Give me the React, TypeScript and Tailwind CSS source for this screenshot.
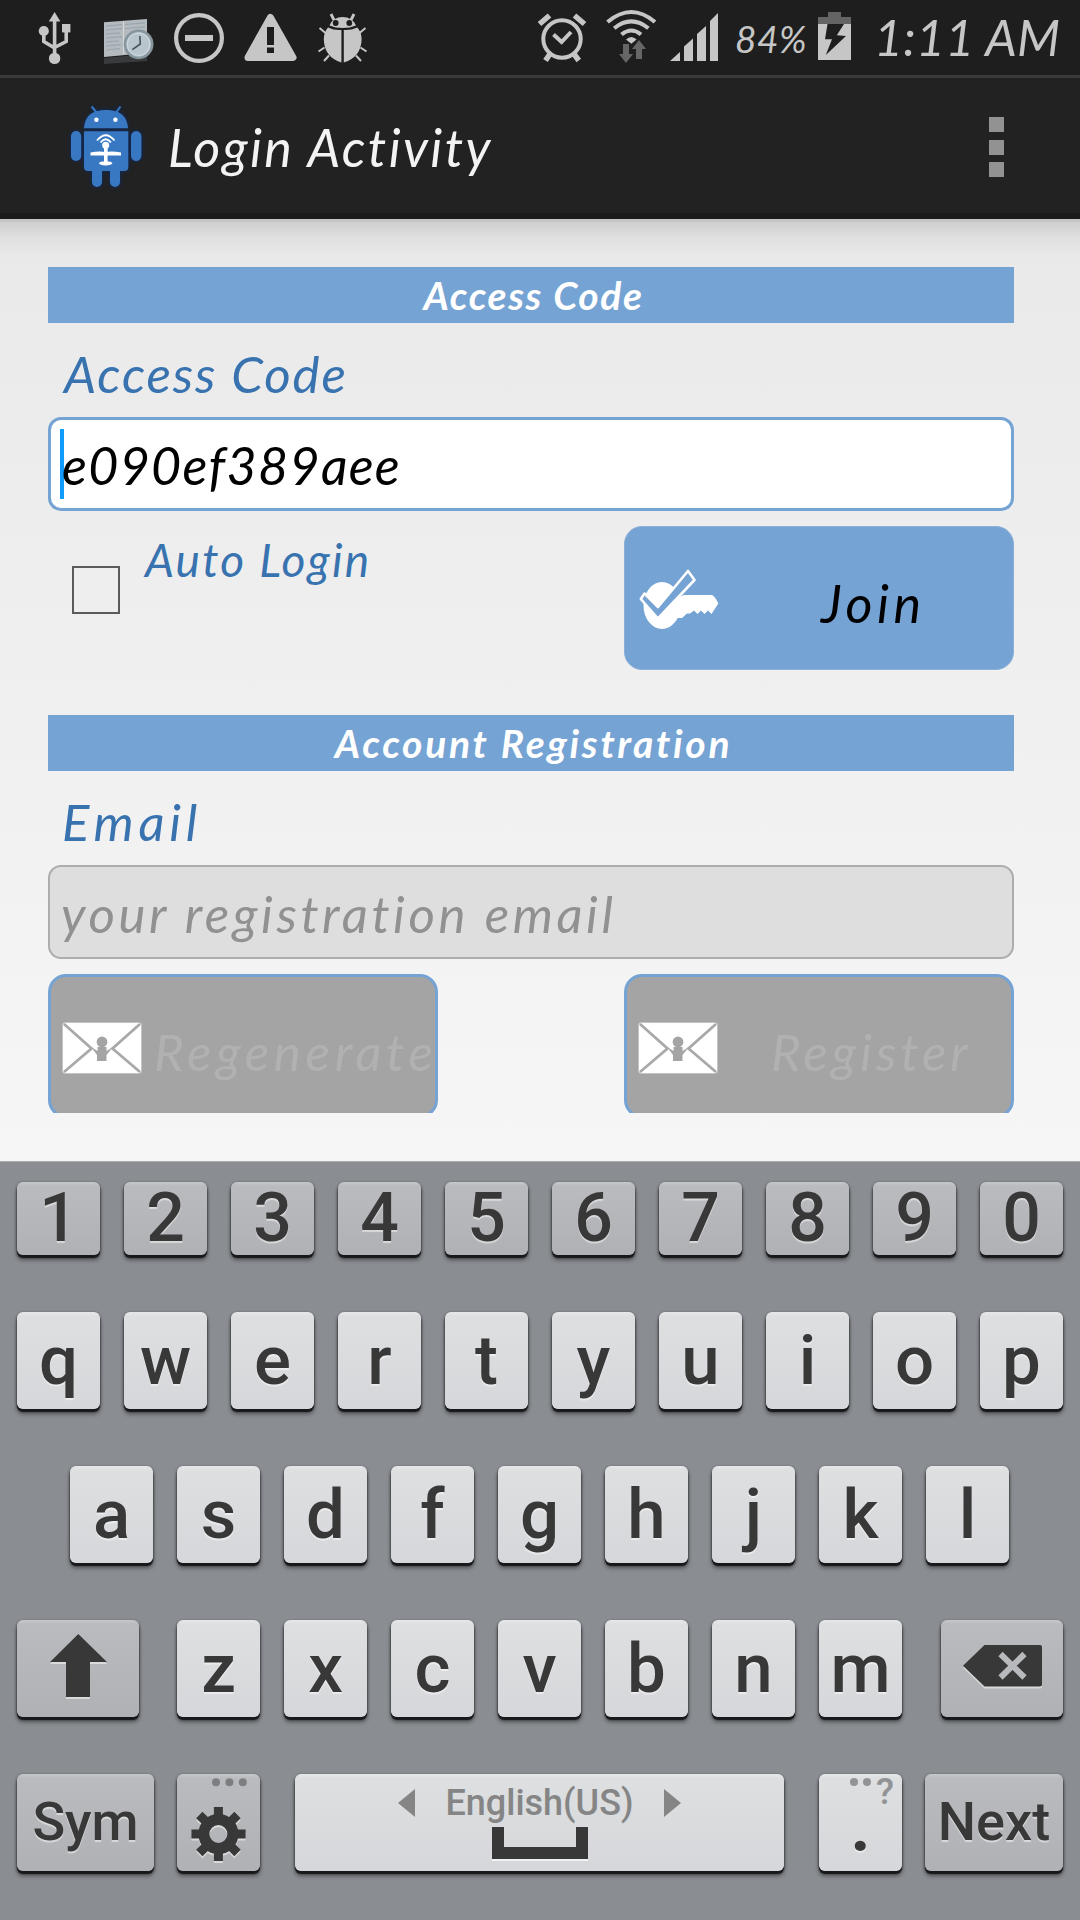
import React from "react";

const hand = "font-['Lato'] italic whitespace-nowrap leading-none";

function StatusBar() {
  return (
    <header className="flex h-[78px] items-start border-b-[3px] border-[#3a3a3a] bg-[#1e1e1e]">
      <svg className="ml-[37px]" width="36" height="75" viewBox="37 0 36 75" fill="none" stroke="#c6c6c6" strokeWidth="3.6">
        <path d="M54.6 20V56M43.8 33V41.5L54.6 48M66.2 30V41.5L54.6 47.5" />
        <path d="M54.6 12L60.4 21.5H48.8Z" fill="#c6c6c6" stroke="none" />
        <circle cx="54.6" cy="58.4" r="5.7" fill="#c6c6c6" stroke="none" />
        <circle cx="43.8" cy="31" r="5.1" fill="#c6c6c6" stroke="none" />
        <path d="M62 24h8.4v8.4H62z" fill="#c6c6c6" stroke="none" />
      </svg>
      <svg className="ml-[29px]" width="54" height="75" viewBox="102 0 54 75">
        <path d="M104 58L147 54V61L104 64Z" fill="#3a3b3c" />
        <path d="M104 22.3L147 19V53L104 57Z" fill="#b4babe" />
        <path d="M106 26l16-1.3M106 30l16-1.3M106 34l14-1.2M106 38l16-1.3M106 42l13-1.2M106 46l15-1.4M106 50l14-1.4M125 24.5l20-1.6M125 28.5l20-1.6" stroke="#98a6b0" strokeWidth="1.2" />
        <path d="M123.5 21V54" stroke="#d5d8da" />
        <circle cx="138.6" cy="44.3" r="13.6" fill="#b9c5cc" stroke="#86959e" strokeWidth="2.6" />
        <circle cx="138.6" cy="44.3" r="11.2" fill="none" stroke="#d0d9dd" />
        <path d="M139.8 36l.5 8-8 5.6" stroke="#47525a" strokeWidth="1.6" fill="none" />
      </svg>
      <svg className="ml-[17px]" width="52" height="75" viewBox="173 0 52 75">
        <circle cx="199" cy="38" r="22.9" fill="none" stroke="#c6c6c6" strokeWidth="4.2" />
        <path d="M185 35h28v6h-28z" fill="#c6c6c6" />
      </svg>
      <svg className="ml-[19px]" width="54" height="75" viewBox="244 0 54 75">
        <path d="M270.4 17.5L293 57.5H248Z" fill="#c6c6c6" stroke="#c6c6c6" strokeWidth="7" strokeLinejoin="round" />
        <path d="M267 27h7v18h-7zM267 47.5h7V53h-7z" fill="#1e1e1e" />
      </svg>
      <svg className="ml-[19px]" width="52" height="75" viewBox="317 0 52 75" stroke="#c6c6c6" strokeWidth="2" fill="none">
        <path d="M331 14l3 6M354 14l-3 6" strokeWidth="2.8" />
        <path d="M319.5 28l6 5M318.5 51.5l6-4M324 61l5-5.5M365.5 28l-6 5M366.5 51.5l-6-4M361 61l-5-5.5" />
        <path d="M329.5 25.5Q333 17 342.6 17T356 25.5Q350 28 342.6 28T329.5 25.5Z" fill="#c6c6c6" stroke="none" />
        <path d="M328 27.5Q334 30.5 341.4 30V62.5Q324 57 323.8 39Q324 32 328 27.5ZM357.3 27.5Q351 30.5 343.8 30V62.5Q361.4 57 361.6 39Q361.4 32 357.3 27.5Z" fill="#c6c6c6" stroke="none" />
        <circle cx="335.7" cy="23" r="2.9" fill="#1e1e1e" stroke="none" />
        <circle cx="349.3" cy="23" r="2.9" fill="#1e1e1e" stroke="none" />
      </svg>
      <svg className="ml-[168px]" width="52" height="75" viewBox="537 0 52 75" fill="none" stroke="#c6c6c6">
        <circle cx="562" cy="39" r="18.7" strokeWidth="4" />
        <path d="M553.5 34.5L561.6 42L571 32" strokeWidth="4" />
        <path d="M539.5 24L549.5 15.5M584.5 24L574.5 15.5" strokeWidth="5.5" />
        <path d="M545.5 60.5L550 54M578.8 60.5L574 54" strokeWidth="5.5" />
      </svg>
      <svg className="ml-[16px]" width="54" height="75" viewBox="605 0 54 75" fill="none" stroke="#c6c6c6" strokeWidth="4">
        <path d="M607.5 22Q631.3 2 655 22M614.2 28.3Q631.3 14.5 648.4 28.3M621.5 34.5Q631.3 26.5 641 34.5" />
        <path d="M626 39.5Q631.3 34.5 636.6 39.5L631.3 43.8Z" fill="#c6c6c6" stroke="none" />
        <path d="M623 44h6v10h4l-7 9-7-9h4zM636 59h6V49h4l-7-9-7 9h4z" fill="#666" stroke="none" />
      </svg>
      <svg className="ml-[10px]" width="52" height="75" viewBox="669 0 52 75" fill="#c6c6c6">
        <path d="M670 61L680 52V61ZM684 61V46.5L693 38.5V61ZM697 61V34L706 26V61ZM710 61V21L718 13V61Z" />
      </svg>
      <span className={`${hand} ml-[14px] mt-[20px] w-[76px] text-[37px] tracking-[0.5px] text-[#c6c6c6]`}>84%</span>
      <svg className="ml-[5px]" width="38" height="75" viewBox="816 0 38 75">
        <path d="M828 12h13v5h10v7h-33v-7h10z" fill="#646464" />
        <path d="M818 24h33v36h-33z" fill="#c6c6c6" />
        <path d="M827.5 24H844L836.8 35.3L846 36L825.8 55L832 39.3H825Z" fill="#1e1e1e" />
      </svg>
      <span className={`${hand} ml-[20px] mt-[12px] text-[50px] tracking-[0.3px] text-[#c6c6c6]`}>1:11 AM</span>
    </header>
  );
}

function AppBar() {
  return (
    <div className="flex h-[141px] items-start border-b-[6px] border-[#1b1b1b] bg-[#222222]">
      <svg className="ml-[64px] mt-[20px] drop-shadow-[0_0_2px_#0b2a66]" width="84" height="94" viewBox="64 98 84 94">
        <g fill="#3878c2">
          <path d="M84 128.2Q85 110 106 110T128 128.2ZM84 131.2H128.3V167a4 4 0 0 1-4 4H88a4 4 0 0 1-4-4Z" />
          <rect x="71" y="131" width="10.2" height="30" rx="5.1" />
          <rect x="131" y="131" width="10.4" height="30" rx="5.2" />
          <path d="M92 170h10v12a5 5 0 0 1-10 0zM110 170h10v12a5 5 0 0 1-10 0z" />
        </g>
        <path d="M91.6 106.5L97 113M120.5 106.5L115.7 113" stroke="#3878c2" strokeWidth="2" />
        <g fill="#fff">
          <circle cx="96.4" cy="119.7" r="2.2" />
          <circle cx="115.4" cy="119.7" r="2.2" />
          <circle cx="105.7" cy="145.3" r="3.5" />
          <path d="M104 146h3.6v16H104zM90.5 152.5Q98 151 105.7 152Q113 151 121 152.5V155.5H90.5Z" />
          <ellipse cx="105.7" cy="163.3" rx="6.7" ry="2.1" />
        </g>
        <path d="M97 140.5Q105.7 130 114.5 140.5M100.5 142.5Q105.7 136 111 142.5" fill="none" stroke="#fff" strokeWidth="1.8" />
      </svg>
      <h1 className={`${hand} ml-[20px] mt-[43px] text-[52px] tracking-[2.4px] text-[#f3f3f3]`}>Login Activity</h1>
      <div className="ml-auto mr-[76px] mt-[39px] flex flex-col gap-[7.5px]">
        <i className="size-[15px] bg-[#929292]" />
        <i className="size-[15px] bg-[#929292]" />
        <i className="size-[15px] bg-[#929292]" />
      </div>
    </div>
  );
}

function SectionTitle({ children, spacing }: { children: string; spacing: string }) {
  return (
    <h2 className={`${hand} h-[56px] shrink-0 bg-[#75a3d3] pl-[5px] pt-[9px] text-center text-[39px] font-bold text-white ${spacing}`}>{children}</h2>
  );
}

function Envelope() {
  return (
    <svg width="80" height="52" viewBox="62 1022 80 52">
      <rect x="62.5" y="1022.5" width="79" height="51" rx="3" fill="#fff" stroke="#c4c4c4" />
      <path d="M64 1024L91.5 1048.5L64 1072M140 1024L112.5 1048.5L140 1072" fill="none" stroke="#a9a9a9" strokeWidth="2.8" />
      <path d="M91 1047L97.5 1051V1047H106.500V1051L113 1047L106.500 1055V1061H97V1055Z" fill="#a4a4a4" />
      <circle cx="102" cy="1042" r="5.400" fill="#a4a4a4" />
    </svg>
  );
}

function DisabledButton({ label, text }: { label: string; text: string }) {
  return (
    <button className="flex h-[144px] w-[390px] items-start overflow-hidden rounded-[18px] border-[3px] border-[#75a3d3] bg-[#a4a4a4] pl-[11px] pt-[45px]">
      <span className="shrink-0"><Envelope /></span>
      <span className={`${hand} mt-[4px] text-[51px] text-[#b1b1b1] ${text}`}>{label}</span>
    </button>
  );
}

function LoginForm() {
  return (
    <main className="h-[942px] bg-[linear-gradient(#c6c6c6_0px,#c6c6c6_3px,#cfcfcf_3px,#dfdfdf_18px,#e9e9e9_36px,#eaeaea_60px,#f6f6f6_942px)] pl-[48px] pt-[48px]">
      <div className="flex h-[846px] w-[966px] flex-col overflow-hidden">
        <SectionTitle spacing="tracking-[1.6px]">Access Code</SectionTitle>
        <label className={`${hand} h-[94px] shrink-0 pl-[16px] pt-[25px] text-[51px] tracking-[1.9px] text-[#3873b0]`}>Access Code</label>
        <div className="flex h-[94px] shrink-0 items-start rounded-[13px] border-[3px] border-[#75a3d3] bg-white pl-[9px] pt-[9px]">
          <i className="h-[70px] w-[4px] shrink-0 bg-[#109bff]" />
          <span className={`${hand} ml-[-2px] mt-[10px] text-[52px] tracking-[1.3px] text-black`}>e090ef389aee</span>
        </div>
        <div className="mt-[15px] flex h-[189px] shrink-0 items-start">
          <i className="ml-[24px] mt-[40px] h-[48px] w-[48px] shrink-0 border-2 border-[#5a5a5a]" />
          <span className={`${hand} ml-[25px] mt-[11px] text-[46px] tracking-[2.2px] text-[#3873b0]`}>Auto Login</span>
          <button className="ml-auto flex h-[144px] w-[390px] items-start rounded-[18px] border border-[#8aafd8] bg-[#75a3d3] pl-[12px] pt-[38px]">
            <svg width="86" height="68" viewBox="637 565 86 68">
              <ellipse cx="662" cy="605.500" rx="18.500" ry="23.500" fill="#fff" />
              <path d="M668 602L684 595H712Q715 596 718.300 603.500L711.500 614L708 610.500L704.500 614L701 610.500L697.500 614L694 610.500L690 613.500H687L682 618H677L670 624Z" fill="#fff" />
              <path d="M644.500 593.500L658 607L688 571L694.500 580L658 618.500L640.800 599Z" fill="#75a3d3" stroke="#fff" strokeWidth="2.600" strokeLinejoin="round" />
            </svg>
            <span className={`${hand} ml-[98px] mt-[12px] text-[52px] tracking-[4.500px] text-black`}>Join</span>
          </button>
        </div>
        <SectionTitle spacing="tracking-[2.7px]">Account Registration</SectionTitle>
        <label className={`${hand} h-[94px] shrink-0 pl-[14px] pt-[25px] text-[51px] tracking-[4.800px] text-[#3873b0]`}>Email</label>
        <div className="h-[94px] shrink-0 rounded-[13px] border-2 border-[#adadad] bg-[#dedede] pl-[11px] pt-[21px]">
          <span className={`${hand} block text-[51px] tracking-[3.600px] text-[#919191]`}>your registration email</span>
        </div>
        <div className="mt-[15px] flex shrink-0 justify-between">
          <DisabledButton label="Regenerate" text="ml-[12px] tracking-[4.700px]" />
          <DisabledButton label="Register" text="ml-[53px] tracking-[4px]" />
        </div>
      </div>
    </main>
  );
}

const keyBase =
  "flex shrink-0 rounded-[6px] text-[#383838] [text-shadow:0_2px_1px_rgba(255,255,255,0.5)] shadow-[0_3px_1px_#17181a,0_5px_4px_rgba(0,0,0,0.45),0_1px_3px_rgba(0,0,0,0.6)]";
const center = "items-start justify-center";
const light = "bg-[linear-gradient(#e6e8e9_0px,#dddfe1_4px,#d6d7da_100%)]";
const dark = "bg-[linear-gradient(#c6c8cb_0px,#babbbf_4px,#b0b1b5_100%)]";
const emboss = "drop-shadow-[0_2px_0_rgba(255,255,255,0.5)]";

function LetterKeys({ letters }: { letters: string }) {
  return (
    <div className="flex gap-[24px]">
      {letters.split("").map((c) => (
        <div key={c} className={`${keyBase} ${center} ${light} h-[97px] w-[83px] pt-[14px] text-[69px] leading-[70px]`}>{c}</div>
      ))}
    </div>
  );
}

function Keyboard() {
  return (
    <section className="h-[759px] border-t border-[#aaacaf] bg-[#8a8d92] pl-[17px] pt-[20px] font-['Roboto'] font-medium">
      <div className="flex gap-[24px]">
        {"1234567890".split("").map((c) => (
          <div key={c} className={`${keyBase} ${center} ${dark} h-[73px] w-[83px] pt-px text-[68px] leading-[70px]`}>{c}</div>
        ))}
      </div>
      <div className="mt-[57px]"><LetterKeys letters="qwertyuiop" /></div>
      <div className="ml-[53px] mt-[57px]"><LetterKeys letters="asdfghjkl" /></div>
      <div className="mt-[57px] flex">
        <div className={`${keyBase} ${center} ${dark} mr-[38px] h-[97px] w-[122px]`}>
          <svg className={emboss} width="122" height="97" viewBox="17 1620 122 97" fill="#383838">
            <path d="M78.300 1634L107 1662H90V1697H66V1662H50Z" />
          </svg>
        </div>
        <LetterKeys letters="zxcvbnm" />
        <div className={`${keyBase} ${center} ${dark} ml-[39px] h-[97px] w-[122px]`}>
          <svg className={emboss} width="122" height="97" viewBox="941 1620 122 97">
            <path d="M963 1665.700L984.500 1645H1040a2 2 0 0 1 2 2V1684.500a2 2 0 0 1-2 2H984.500Z" fill="#383838" />
            <path d="M1000.500 1654L1024.500 1677.500M1024.500 1654L1000.500 1677.500" stroke="#b8b9bd" strokeWidth="6" />
          </svg>
        </div>
      </div>
      <div className="mt-[57px] flex">
        <div className={`${keyBase} ${center} ${dark} h-[97px] w-[137px] pt-[18px] text-[54px] leading-[60px]`}>Sym</div>
        <div className={`${keyBase} ${center} ${dark} ml-[23px] h-[97px] w-[83px]`}>
          <svg width="83" height="97" viewBox="177 1774 83 97">
            <g fill="#7d7e80">
              <circle cx="216" cy="1782.300" r="4" />
              <circle cx="229.400" cy="1782.300" r="4" />
              <circle cx="242.800" cy="1782.300" r="4" />
            </g>
            <g className={emboss} stroke="#383838" fill="none">
              <circle cx="218.400" cy="1834" r="14.500" strokeWidth="11" />
              <path d="M218.400 1807V1818M218.400 1850V1861M191.400 1834H202M235 1834H245.600M199.300 1815L207 1822.500M230 1845.500L237.500 1853M237.500 1815L230 1822.500M207 1845.500L199.300 1853" strokeWidth="9" />
            </g>
          </svg>
        </div>
        <div className={`${keyBase} ${light} ml-[35px] h-[97px] w-[489px] flex-col items-center`}>
          <div className="flex h-[53px] items-center gap-[30px] pt-[4px] text-[36px] font-medium leading-[42px] text-[#858585]">
            <svg width="17" height="28" viewBox="0 0 17 28"><path d="M17 0V28L0 14Z" fill="#858585" /></svg>
            <span className="[text-shadow:none]">English(US)</span>
            <svg width="17" height="28" viewBox="0 0 17 28"><path d="M0 0V28L17 14Z" fill="#858585" /></svg>
          </div>
          <i className="h-[32px] w-[96px] border-x-[12px] border-b-[12px] border-[#383838] shadow-[0_2px_0_#f0f1f2]" />
        </div>
        <div className={`${keyBase} ${center} ${light} relative ml-[35px] h-[97px] w-[83px] pt-[15px] text-[80px] leading-[70px]`}>
          .
          <div className="absolute right-[8px] top-[4px] flex items-start gap-[5px] text-[37px] leading-[28px] text-[#929394] [text-shadow:none]">
            <i className="size-[8px] rounded-full bg-[#929394]" />
            <i className="size-[8px] rounded-full bg-[#929394]" />
            <span>?</span>
          </div>
        </div>
        <div className={`${keyBase} ${center} ${dark} ml-[23px] h-[97px] w-[138px] pt-[18px] text-[54px] leading-[60px]`}>Next</div>
      </div>
    </section>
  );
}

export default function App() {
  return (
    <div className="flex h-[1920px] w-[1080px] flex-col overflow-hidden">
      <StatusBar />
      <AppBar />
      <LoginForm />
      <Keyboard />
    </div>
  );
}
